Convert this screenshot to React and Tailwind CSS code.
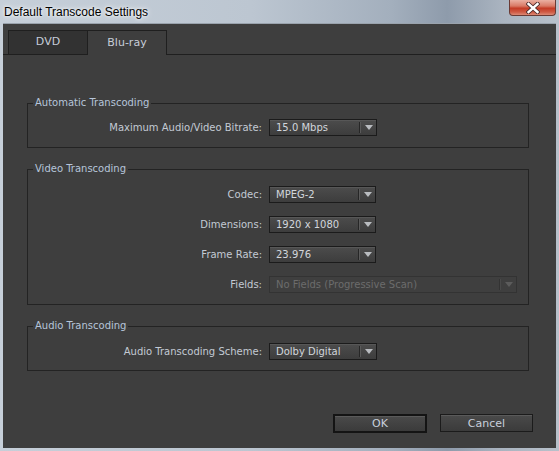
import React from 'react';

const font = { fontFamily: '"DejaVu Sans", Verdana, sans-serif' };
const titleFont = { fontFamily: '"Liberation Sans", Arial, sans-serif' };

function Arrow({ disabled }) {
    return (
        <svg width="8" height="5" viewBox="0 0 8 5">
            <path d="M0 0 L8 0 L4 5 Z" fill={disabled ? '#5c5c5c' : '#b9bcc0'} />
        </svg>
    );
}

function Dropdown({ value, width, disabled }) {
    return (
        <div
            className={`h-[17px] flex items-center border ${
                disabled
                    ? 'border-[#333333] bg-[#3f3f3f] text-[#6c6c6c]'
                    : 'border-[#1b1b1b] bg-gradient-to-b from-[#4c4c4c] to-[#3d3d3d] text-[#d2d6dc] shadow-[inset_0_1px_0_#575757]'
            }`}
            style={{ width }}
        >
            <span className="flex-1 pl-[6px] whitespace-nowrap leading-none">{value}</span>
            <div className="flex h-[11px]">
                <div className={`w-px ${disabled ? 'bg-[#333333]' : 'bg-[#262626]'}`} />
                <div className={`w-px ${disabled ? 'bg-[#4a4a4a]' : 'bg-[#5a5a5a]'}`} />
            </div>
            <div className="w-[15px] flex justify-center items-center">
                <Arrow disabled={disabled} />
            </div>
        </div>
    );
}

function Row({ label, value, width, disabled }) {
    return (
        <div className="flex items-center">
            <div className="w-[241px] pr-[7px] text-right text-[#c3cad4] whitespace-nowrap">{label}</div>
            <Dropdown value={value} width={width} disabled={disabled} />
        </div>
    );
}

function Group({ title, children, className }) {
    return (
        <div className={`relative ml-[24px] mr-[27px] border border-[#232323] ${className}`}>
            <span className="absolute -top-[8px] left-[5px] px-[2px] bg-[#3e3e3e] text-[#b6c5da] leading-[14px]">
                {title}
            </span>
            {children}
        </div>
    );
}

export default function App() {
    return (
        <div
            className="w-[559px] h-[451px] flex flex-col text-[10px] bg-[linear-gradient(90deg,#c6cfd9_0%,#bcc6d1_45%,#a3afbd_70%,#8e9bab_80%,#aab4c0_90%,#b8c1cb_100%)]"
            style={font}
        >
            <div className="h-[23px] flex justify-between items-start shrink-0">
                <div
                    className="pl-[4px] pt-[3px] text-[12px] text-black [text-shadow:0_0_6px_#ffffff,0_0_3px_#ffffff]"
                    style={titleFont}
                >
                    Default Transcode Settings
                </div>
                <div className="mr-[3px] w-[47px] h-[16px] rounded-b-[4px] border border-t-0 border-[#6a3a34] bg-[linear-gradient(180deg,#eab0a2_0%,#d97a66_40%,#c43c26_55%,#cf5a44_80%,#dc8a76_100%)] flex items-center justify-center">
                    <svg width="14" height="12" viewBox="0 0 14 12">
                        <path d="M2.5 2 L11.5 10 M11.5 2 L2.5 10" stroke="#4a2a2a" strokeWidth="4.2" strokeLinecap="square" />
                        <path d="M2.5 2 L11.5 10 M11.5 2 L2.5 10" stroke="#ffffff" strokeWidth="2.4" strokeLinecap="square" />
                    </svg>
                </div>
            </div>

            <div className="flex-1 px-[3px] pb-[3px] flex flex-col">
                <div className="flex-1 bg-[#3e3e3e] border-t border-[#9aa3ad] flex flex-col">
                    <div className="flex pt-[6px] pl-[5px] border-b border-[#1f1f1f] h-[31px] items-end">
                        <div className="w-[80px] h-[24px] bg-[#323232] border border-b-0 border-[#1f1f1f] flex items-center justify-center text-[#c6cdd8] text-[11px]">
                            DVD
                        </div>
                        <div className="w-[79px] h-[25px] -mb-px bg-[#3e3e3e] border-t border-r border-[#1f1f1f] flex items-center justify-center text-[#c6cdd8] text-[11px]">
                            Blu-ray
                        </div>
                    </div>

                    <Group title="Automatic Transcoding" className="mt-[48px] pt-[15px] pb-[11px]">
                        <Row label="Maximum Audio/Video Bitrate:" value="15.0 Mbps" width="108px" />
                    </Group>

                    <Group title="Video Transcoding" className="mt-[21px] pt-[16px] pb-[11px] flex flex-col gap-[13px]">
                        <Row label="Codec:" value="MPEG-2" width="107px" />
                        <Row label="Dimensions:" value="1920 x 1080" width="107px" />
                        <Row label="Frame Rate:" value="23.976" width="107px" />
                        <Row label="Fields:" value="No Fields (Progressive Scan)" width="248px" disabled />
                    </Group>

                    <Group title="Audio Transcoding" className="mt-[21px] pt-[16px] pb-[10px]">
                        <Row label="Audio Transcoding Scheme:" value="Dolby Digital" width="108px" />
                    </Group>

                    <div className="mt-[43px] flex justify-end gap-[13px] pr-[23px]">
                        <button className="w-[94px] h-[19px] border-2 border-[#141414] bg-gradient-to-b from-[#4a4a4a] to-[#3b3b3b] text-[#c8d0dc] text-[11px] leading-none shadow-[inset_0_1px_0_#5a5a5a]">
                            OK
                        </button>
                        <button className="w-[93px] h-[18px] border border-[#1b1b1b] bg-gradient-to-b from-[#4a4a4a] to-[#3b3b3b] text-[#c8d0dc] text-[11px] leading-none shadow-[inset_0_1px_0_#5a5a5a]">
                            Cancel
                        </button>
                    </div>
                </div>
            </div>
        </div>
    );
}
